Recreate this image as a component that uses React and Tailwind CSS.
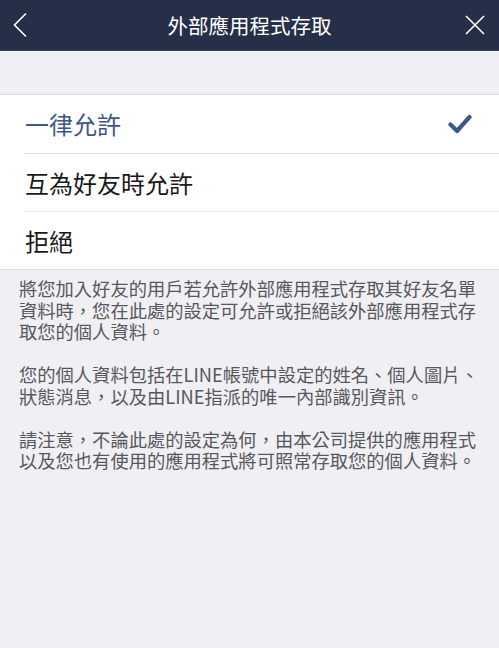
import React, { useState } from 'react';

const options = ['一律允許', '互為好友時允許', '拒絕'];

const App = () => {
    const [selected, setSelected] = useState(0);

    return (
        <div
            className="min-h-[648px] w-full bg-[#efeff4]"
            style={{ fontFamily: '"Noto Sans CJK TC", "Noto Sans", sans-serif' }}
        >
            <div className="flex h-[51px] items-center justify-between bg-[#252f47] px-[12px] border-b border-[#3a4256]">
                <button className="flex h-[30px] w-[24px] items-center">
                    <svg width="16" height="26" viewBox="0 0 16 26" fill="none">
                        <path d="M14 1.5 L2.5 13 L14 24.5" stroke="#ffffff" strokeWidth="1.6" />
                    </svg>
                </button>
                <h1 className="pt-[1px] text-[20.5px] leading-none text-white">外部應用程式存取</h1>
                <button className="flex h-[30px] w-[24px] items-center justify-end pr-[2px]">
                    <svg width="20" height="20" viewBox="0 0 20 20" fill="none">
                        <path d="M1 1 L19 19 M19 1 L1 19" stroke="#ffffff" strokeWidth="1.6" />
                    </svg>
                </button>
            </div>

            <div className="h-[43px]" />

            <ul className="border-t border-b border-[#dcdce0] bg-white">
                {options.map((label, i) => (
                    <li
                        key={label}
                        onClick={() => setSelected(i)}
                        className="pl-[24px] cursor-pointer"
                    >
                        <div
                            className={`flex h-[58px] items-center justify-between pr-[27px] ${
                                i > 0 ? 'border-t border-[#e3e3e6]' : ''
                            }`}
                        >
                            <span
                                className={`pl-[1px] text-[24px] leading-none ${
                                    selected === i ? 'text-[#3d5888]' : 'text-[#1a1a1a]'
                                }`}
                            >
                                {label}
                            </span>
                            {selected === i && (
                                <svg width="24" height="20" viewBox="0 0 24 20" fill="none">
                                    <path
                                        d="M2.5 10.5 L9 17 L21.5 3"
                                        stroke="#3d5888"
                                        strokeWidth="4.2"
                                        strokeLinecap="round"
                                        strokeLinejoin="round"
                                    />
                                </svg>
                            )}
                        </div>
                    </li>
                ))}
            </ul>

            <div className="pl-[19px] pr-[19px] pt-[8px] text-[18.3px] leading-[21.5px] text-[#58585c] space-y-[21.5px]">
                <p>將您加入好友的用戶若允許外部應用程式存取其好友名單資料時，您在此處的設定可允許或拒絕該外部應用程式存取您的個人資料。</p>
                <p>您的個人資料包括在LINE帳號中設定的姓名、個人圖片、狀態消息，以及由LINE指派的唯一內部識別資訊。</p>
                <p>請注意，不論此處的設定為何，由本公司提供的應用程式以及您也有使用的應用程式將可照常存取您的個人資料。</p>
            </div>
        </div>
    );
};

export default App;
